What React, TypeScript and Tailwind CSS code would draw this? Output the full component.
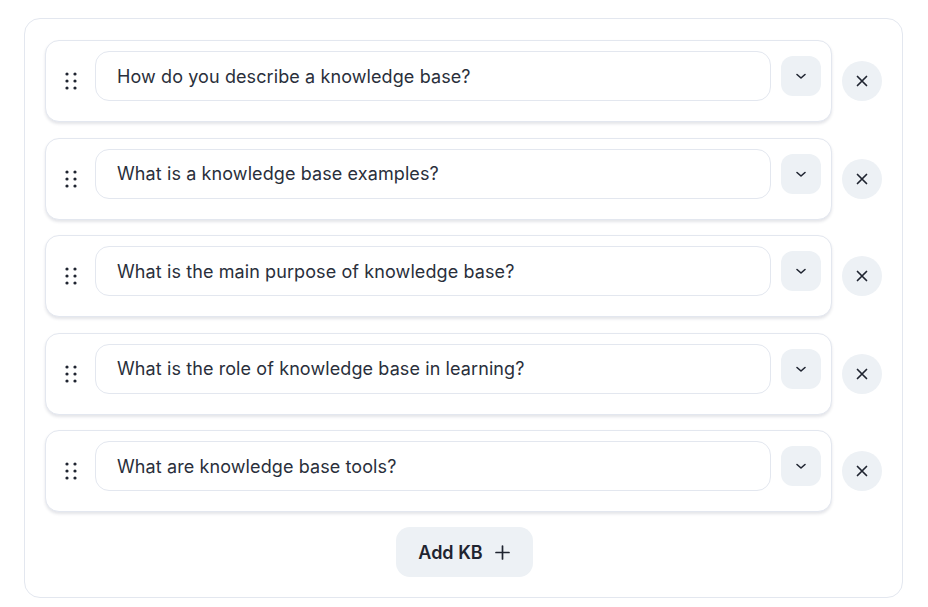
import React from "react";

const items = [
  "How do you describe a knowledge base?",
  "What is a knowledge base examples?",
  "What is the main purpose of knowledge base?",
  "What is the role of knowledge base in learning?",
  "What are knowledge base tools?",
];

function Handle() {
  return (
    <svg width="12" height="18" viewBox="0 0 12 18" className="shrink-0">
      {[2, 9, 16].map((y) =>
        [2, 10].map((x) => <circle key={`${x}-${y}`} cx={x} cy={y} r="1.6" fill="#1f2430" />)
      )}
    </svg>
  );
}

export default function App() {
  return (
    <div
      className="w-[928px] h-[607px] bg-white pt-[18px] px-[24px]"
      style={{ fontFamily: "Inter, 'Noto Sans', sans-serif" }}
    >
      <div className="w-[879px] h-[580px] rounded-[16px] border border-[#e3e7ef] pt-[21px] pl-[20px] pr-[19px] flex flex-col">
        <div className="flex flex-col gap-[15.5px]">
          {items.map((t) => (
            <div key={t} className="flex items-center gap-[10px]">
              <div className="w-[787px] h-[82px] rounded-[14px] border border-[#e3e7ef] shadow-[0_2px_3px_rgba(30,40,70,0.12)] bg-white flex items-center pl-[19px] pr-[10px]">
                <Handle />
                <div className="ml-[18px] mb-[10px] flex items-start">
                  <div className="w-[676px] h-[50px] rounded-[14px] border border-[#e3e7ef] flex items-center pl-[21px] text-[18px] text-[#2a2f3b] tracking-[0.1px]">
                    {t}
                  </div>
                  <div className="ml-[10px] mt-[5px] w-[40px] h-[40px] rounded-[12px] bg-[#edf1f5] flex items-center justify-center">
                    <svg width="12" height="8" viewBox="0 0 12 8">
                      <path d="M2 2.5 L6 6 L10 2.5" fill="none" stroke="#1f2430" strokeWidth="1.6" strokeLinecap="round" strokeLinejoin="round" />
                    </svg>
                  </div>
                </div>
              </div>
              <div className="w-[40px] h-[40px] rounded-full bg-[#edf1f5] flex items-center justify-center">
                <svg width="14" height="14" viewBox="0 0 14 14">
                  <path d="M2.5 2.5 L11.5 11.5 M11.5 2.5 L2.5 11.5" fill="none" stroke="#1f2430" strokeWidth="1.7" strokeLinecap="round" />
                </svg>
              </div>
            </div>
          ))}
        </div>
        <div className="flex justify-center mt-[15px]">
          <div className="w-[137px] h-[50px] rounded-[14px] bg-[#edf1f5] flex items-center justify-center gap-[12px] text-[18px] font-semibold text-[#1f2430]">
            <span>Add KB</span>
            <svg width="15" height="15" viewBox="0 0 15 15">
              <path d="M7.5 1 V14 M1 7.5 H14" fill="none" stroke="#1f2430" strokeWidth="1.7" strokeLinecap="round" />
            </svg>
          </div>
        </div>
      </div>
    </div>
  );
}
